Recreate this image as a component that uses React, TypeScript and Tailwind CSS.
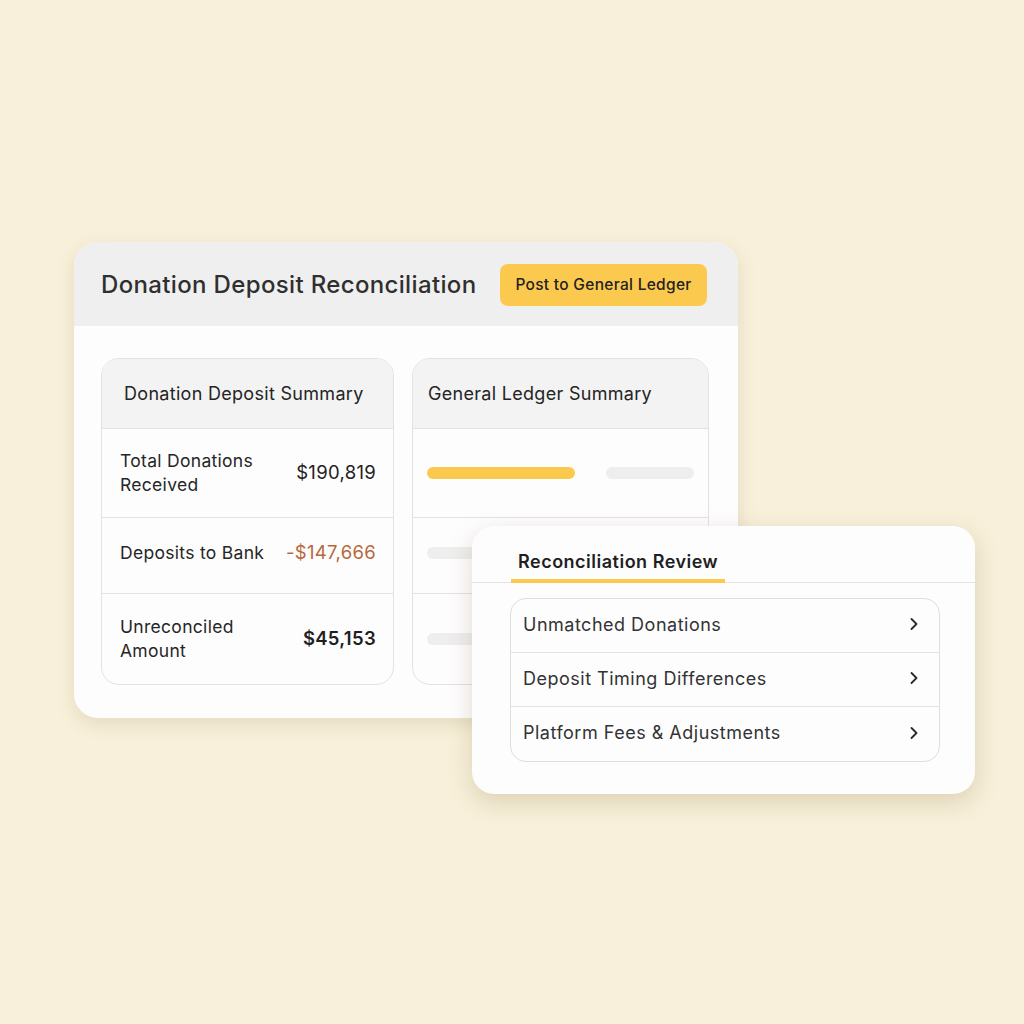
import React from 'react';
import { ChevronRight } from 'lucide-react';

const font = { fontFamily: 'Inter, "Noto Sans", sans-serif' };

const summaryRows = [
  { label: 'Total Donations Received', value: '$190,819', h: 'h-[90px]', pad: '', cls: 'text-[#222] font-normal' },
  { label: 'Deposits to Bank', value: '-$147,666', h: 'h-[76px]', pad: 'pb-[6px]', cls: 'text-[#b8683c] font-normal' },
  { label: 'Unreconciled Amount', value: '$45,153', h: 'h-[91px]', pad: '', cls: 'text-[#1f1f1f] font-semibold' },
];

const reviewItems = ['Unmatched Donations', 'Deposit Timing Differences', 'Platform Fees & Adjustments'];

export default function App() {
  return (
    <div className="relative min-h-screen w-[1024px] h-[1024px] bg-[#f8f0da] overflow-hidden" style={font}>
      {/* Main card */}
      <div className="ml-[74px] pt-[242px]">
        <div className="w-[664px] h-[476px] rounded-[24px] overflow-hidden bg-[#fefdfe] shadow-[0_6px_18px_rgba(140,120,70,0.18)]">
          <div className="h-[84px] bg-[#efefef] flex items-center justify-between pl-[27px] pr-[31px] pt-[2px]">
            <h1 className="text-[24px] font-medium text-[#2f2f2f] tracking-[0.35px]">Donation Deposit Reconciliation</h1>
            <button className="w-[207px] h-[42px] rounded-[8px] bg-[#fcc94f] text-[15.5px] font-medium text-[#222] tracking-[0.3px]">
              Post to General Ledger
            </button>
          </div>
          <div className="flex gap-[18px] pt-[32px] pl-[27px]">
            {/* Donation deposit summary */}
            <div className="w-[293px] h-[327px] rounded-[18px] border border-[#e2e2e2] overflow-hidden flex flex-col">
              <div className="h-[70px] shrink-0 bg-[#f3f3f3] border-b border-[#e2e2e2] flex items-center pl-[22px] text-[18px] text-[#242424] tracking-[0.3px]">
                Donation Deposit Summary
              </div>
              {summaryRows.map((row, i) => (
                <div
                  key={row.label}
                  className={`${row.h} ${row.pad} flex items-center justify-between pl-[18px] pr-[17px] ${i < summaryRows.length - 1 ? 'border-b border-[#e2e2e2]' : ''}`}
                >
                  <span className="text-[17.5px] leading-[24px] text-[#262626] tracking-[0.3px] max-w-[160px]">{row.label}</span>
                  <span className={`text-[18.5px] tracking-[0.3px] ${row.cls}`}>{row.value}</span>
                </div>
              ))}
            </div>

            {/* General ledger summary */}
            <div className="w-[297px] h-[327px] rounded-[18px] border border-[#e2e2e2] overflow-hidden flex flex-col">
              <div className="h-[70px] shrink-0 bg-[#f3f3f3] border-b border-[#e2e2e2] flex items-center pl-[15px] text-[18px] text-[#242424] tracking-[0.3px]">
                General Ledger Summary
              </div>
              <div className="h-[90px] flex items-center pl-[14px] gap-[31px] border-b border-[#e2e2e2]">
                <div className="w-[148px] h-[12px] rounded-full bg-[#fcc94f]" />
                <div className="w-[88px] h-[12px] rounded-full bg-[#eeeeee]" />
              </div>
              <div className="h-[76px] flex items-center pl-[14px] pb-[6px] border-b border-[#e2e2e2]">
                <div className="w-[148px] h-[12px] rounded-full bg-[#eeeeee]" />
              </div>
              <div className="h-[91px] flex items-center pl-[14px]">
                <div className="w-[148px] h-[12px] rounded-full bg-[#eeeeee]" />
              </div>
            </div>
          </div>
        </div>
      </div>

      {/* Reconciliation review overlay */}
      <div className="absolute left-[472px] top-[526px] w-[503px] h-[268px] rounded-[22px] bg-[#fefdfe] shadow-[0_8px_24px_rgba(120,100,50,0.22)]">
        <div className="h-[57px] border-b border-[#e3e3e3] pl-[39px] flex items-end">
          <div className="px-[7px] h-[56px] flex items-center pt-[16px] border-b-[4px] border-[#fcc94f] -mb-px text-[18px] font-semibold text-[#1f1f1f] tracking-[0.5px]">
            Reconciliation Review
          </div>
        </div>
        <div className="mt-[15px] ml-[38px] w-[430px] rounded-[16px] border border-[#dedede] overflow-hidden">
          {reviewItems.map((item, i) => (
            <div
              key={item}
              className={`h-[54px] pb-[3px] flex items-center justify-between pl-[12px] pr-[15px] ${i < reviewItems.length - 1 ? 'border-b border-[#e2e2e2]' : ''}`}
            >
              <span className="text-[18px] text-[#333] tracking-[0.5px]">{item}</span>
              <ChevronRight size={20} strokeWidth={2.2} className="text-[#2a2a2a]" />
            </div>
          ))}
        </div>
      </div>
    </div>
  );
}
